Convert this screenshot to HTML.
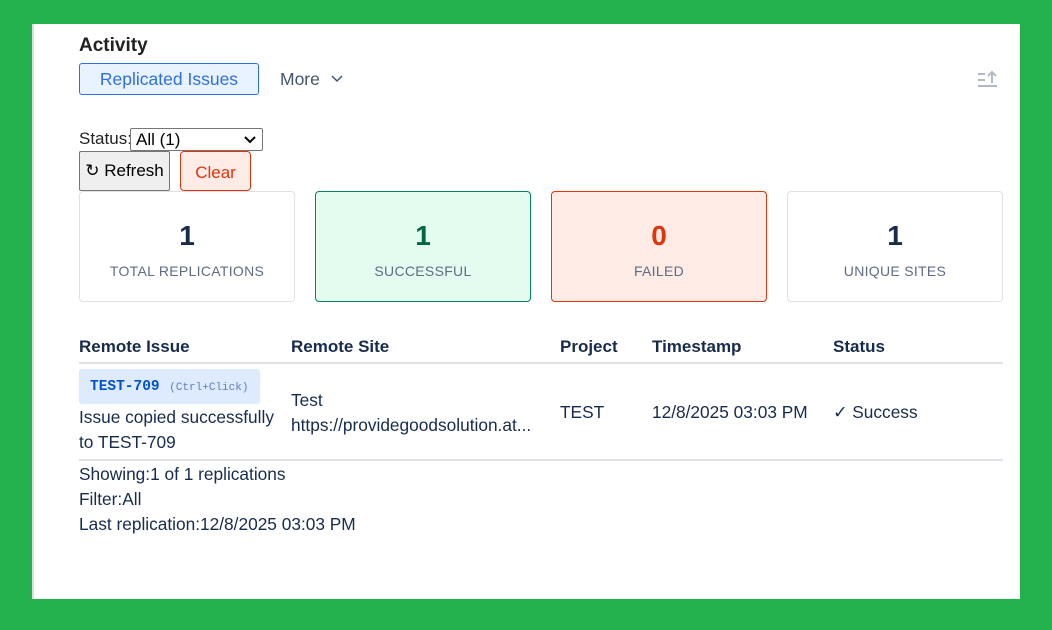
<!DOCTYPE html>
<html><head><meta charset="utf-8"><style>
*{box-sizing:border-box;margin:0;padding:0}
body{width:1052px;height:630px;background:#22b14c;font-family:"Liberation Sans",sans-serif;color:#172b4d;position:relative;overflow:hidden}
.panel{position:absolute;left:32px;top:24px;width:988px;height:575px;background:#fff;border-left:2px solid #ddd}
.a{position:absolute;white-space:nowrap}
.card{position:absolute;top:191px;width:216px;height:111px;border:1px solid #dfe1e6;border-radius:4px;text-align:center}
.card .n{position:absolute;left:0;right:0;top:28px;font-size:28px;font-weight:bold}
.card .l{position:absolute;left:0;right:0;top:71px;font-size:14px;color:#5e6c84;letter-spacing:.3px}
.th{font-weight:bold;font-size:17px;top:337px}
.td{font-size:17.3px}
</style></head><body>
<div class="panel"></div>
<div class="a" style="left:79px;top:35px;font-size:19px;font-weight:bold;color:#222">Activity</div>
<div class="a" style="left:79px;top:63px;width:180px;height:32px;border:1px solid #2f6fe0;border-radius:3px;background:#e9f2ff;color:#2f6fe0;font-size:17.5px;line-height:30px;text-align:center">Replicated Issues</div>
<div class="a" style="left:280px;top:69px;font-size:17.5px;color:#44546f">More</div>
<svg class="a" style="left:331px;top:74px" width="12" height="10"><path d="M1 2 L6 7 L11 2" stroke="#44546f" stroke-width="1.5" fill="none"/></svg>
<svg class="a" style="left:977px;top:70px" width="22" height="20"><path d="M1 4H8M1 10H8M1 16H20M15 13V2M11 6L15 2L19 6" stroke="#b3b9c4" stroke-width="2" fill="none"/></svg>
<div class="a" style="left:79px;top:129px;font-size:17px;color:#222">Status:</div>
<div class="a" style="left:130px;top:128px;width:133px;height:23px;border:1px solid #767676;border-radius:2px;font-size:17px;padding-left:5px;line-height:21px;color:#000">All (1)<svg style="position:absolute;right:6px;top:7px" width="12" height="8"><path d="M1 1L6 6L11 1" stroke="#000" stroke-width="2" fill="none"/></svg></div>
<div class="a" style="left:79px;top:151px;width:91px;height:40px;border:1px solid #767676;background:#efefef;border-radius:2px;font-size:17px;line-height:38px;text-align:center;color:#000">↻ Refresh</div>
<div class="a" style="left:180px;top:151px;width:71px;height:40px;border:1px solid #de350b;background:#ffebe6;border-radius:4px;font-size:17px;line-height:42px;text-align:center;color:#de350b">Clear</div>
<div class="card" style="left:79px"><div class="n">1</div><div class="l">TOTAL REPLICATIONS</div></div>
<div class="card" style="left:315px;background:#e3fcef;border-color:#00875a"><div class="n" style="color:#006644">1</div><div class="l">SUCCESSFUL</div></div>
<div class="card" style="left:551px;background:#ffebe6;border-color:#de350b"><div class="n" style="color:#de350b">0</div><div class="l">FAILED</div></div>
<div class="card" style="left:787px"><div class="n">1</div><div class="l">UNIQUE SITES</div></div>
<div class="a th" style="left:79px">Remote Issue</div>
<div class="a th" style="left:291px">Remote Site</div>
<div class="a th" style="left:560px">Project</div>
<div class="a th" style="left:652px">Timestamp</div>
<div class="a th" style="left:833px">Status</div>
<div class="a" style="left:79px;top:362px;width:924px;height:2px;background:#dfe1e6"></div>
<div class="a" style="left:79px;top:369px;width:181px;height:35px;background:#deebff;border-radius:3px;font-family:'Liberation Mono',monospace;line-height:35px;padding-left:11px"><b style="color:#0052cc;font-size:14.5px">TEST-709</b> <span style="color:#5e7cc0;font-size:11px">(Ctrl+Click)</span></div>
<div class="a td" style="left:79px;top:405px;line-height:25px">Issue copied successfully<br>to TEST-709</div>
<div class="a td" style="left:291px;top:388px;line-height:25px">Test<br>https://providegoodsolution.at...</div>
<div class="a td" style="left:560px;top:402px">TEST</div>
<div class="a td" style="left:652px;top:402px">12/8/2025 03:03 PM</div>
<div class="a td" style="left:833px;top:402px">✓ Success</div>
<div class="a" style="left:79px;top:459px;width:924px;height:2px;background:#dfe1e6"></div>
<div class="a td" style="left:79px;top:462px;line-height:25px">Showing:1 of 1 replications<br>Filter:All<br>Last replication:12/8/2025 03:03 PM</div>
</body></html>
